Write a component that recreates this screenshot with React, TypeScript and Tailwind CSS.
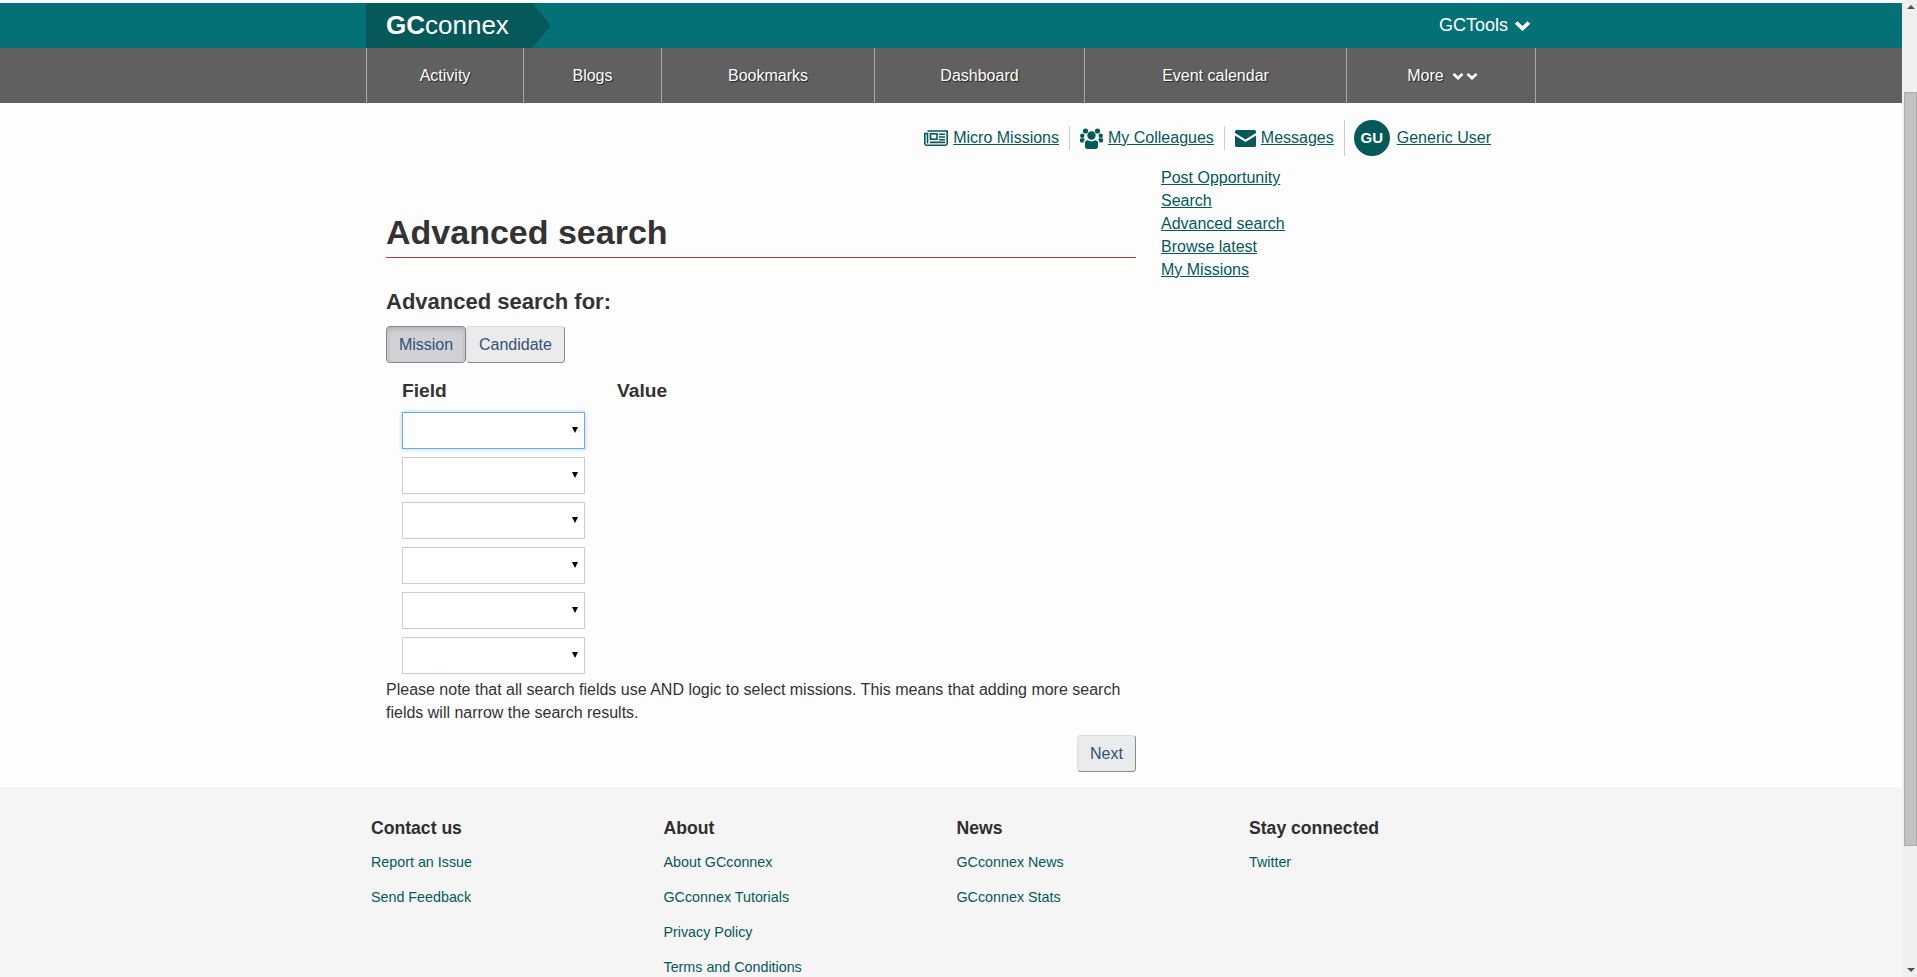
import React from "react";

const navItems: [string, string][] = [
  ["Activity", "w-[157px]"],
  ["Blogs", "w-[138px]"],
  ["Bookmarks", "w-[213px]"],
  ["Dashboard", "w-[210px]"],
  ["Event calendar", "w-[262px]"],
];

function Chevron({ className }: { className: string }) {
  return (
    <svg className={className} viewBox="0 0 16 11" preserveAspectRatio="none">
      <path d="M2 2.5L8 8.5L14 2.5" fill="none" stroke="white" strokeWidth="3.6" />
    </svg>
  );
}

function NewsIcon() {
  return (
    <svg className="h-[16px] w-[24px] text-[#055959]" viewBox="0 0 24 16" fill="none" stroke="currentColor">
      <path d="M3.5 1H23.2V13.5A2 2 0 0 1 21.2 15.2H2.5A2 2 0 0 1 0.8 13.5V3.5H3.5V13.5" strokeWidth="1.6" />
      <rect x="6.5" y="3.8" width="6.5" height="5.4" strokeWidth="1.6" />
      <path d="M15 4.2H21M15 7H21M15 9.8H21M6 12.4H21" strokeWidth="1.6" />
    </svg>
  );
}

function UsersIcon() {
  return (
    <svg className="h-[21px] w-[23px]" viewBox="0 0 23 21" fill="#055959">
      <circle cx="11.5" cy="7.5" r="4.2" />
      <circle cx="5.5" cy="3" r="2.6" />
      <circle cx="17.5" cy="3" r="2.6" />
      <circle cx="2.3" cy="7.8" r="2.2" />
      <circle cx="20.7" cy="7.8" r="2.2" />
      <path d="M0 11.5C0 10.5 1 10.3 2.3 10.3C3.6 10.3 4.6 10.8 5 11.6C4 12.4 3.6 13.4 3.6 14.5H1.2C0.5 14.5 0 14 0 13.3Z" />
      <path d="M23 11.5C23 10.5 22 10.3 20.7 10.3C19.4 10.3 18.4 10.8 18 11.6C19 12.4 19.4 13.4 19.4 14.5H21.8C22.5 14.5 23 14 23 13.3Z" />
      <path d="M5 15C5 13 6.3 12 8 12.2C9 13 10 13.3 11.5 13.3C13 13.3 14 13 15 12.2C16.7 12 18 13 18 15V18.5C18 20 17 21 15.5 21H7.5C6 21 5 20 5 18.5Z" />
    </svg>
  );
}

function MailIcon() {
  return (
    <svg className="h-[17px] w-[21px]" viewBox="0 0 21 17" fill="#055959">
      <path d="M1.5 0H19.5A1.5 1.5 0 0 1 21 1.5V3L10.5 9.5L0 3V1.5A1.5 1.5 0 0 1 1.5 0Z" />
      <path d="M0 5.5L10.5 12L21 5.5V15.5A1.5 1.5 0 0 1 19.5 17H1.5A1.5 1.5 0 0 1 0 15.5Z" />
    </svg>
  );
}

function Select({ focused }: { focused?: boolean }) {
  return (
    <div
      className={
        "relative h-[37px] w-[183px] bg-white border " +
        (focused ? "border-[#66afe9] shadow-[0_0_4px_rgba(102,175,233,0.6)]" : "border-[#cccccc]")
      }
    >
      <span className="absolute right-[6px] top-[14px] h-0 w-0 border-x-[3px] border-t-[6px] border-x-transparent border-t-black" />
    </div>
  );
}

function FooterCol({ title, links, w }: { title: string; links: string[]; w: string }) {
  return (
    <div className={w}>
      <h3 className="text-[17.6px] font-bold leading-[20px] text-[#2f2f2f]">{title}</h3>
      <ul className="mt-[15px] flex flex-col gap-[16px]">
        {links.map((l) => (
          <li key={l} className="text-[14.3px] leading-[19px] text-[#055959]">
            {l}
          </li>
        ))}
      </ul>
    </div>
  );
}

export default function App() {
  return (
    <div className="flex h-[977px] w-[1917px] overflow-hidden bg-white font-['Liberation_Sans',Arial,sans-serif] text-[16px] text-[#333333]">
      <div className="flex w-[1902px] flex-col overflow-hidden">
        <div className="h-[3px] bg-white" />
        <header className="flex h-[45px] bg-[#047177]">
          <div className="mx-auto flex w-[1170px] items-stretch justify-between">
            <div className="relative flex h-full w-[166px] items-center bg-[#055959] pl-[20px] text-[26px] text-white">
              <span className="font-bold">GC</span>
              <span>connex</span>
              <svg className="absolute left-[166px] top-0 h-[45px] w-[19px]" viewBox="0 0 19 45">
                <path d="M0 0L19 22.5L0 45Z" fill="#055959" />
              </svg>
            </div>
            <div className="flex items-center pr-[5px] text-[18px] text-white">
              <span>GCTools</span>
              <Chevron className="ml-[6px] h-[11px] w-[17px]" />
            </div>
          </div>
        </header>
        <nav className="h-[55px] bg-[#606060]">
          <div className="mx-auto flex h-full w-[1170px] border-l border-[#a8a8a8]">
            {navItems.map(([t, w]) => (
              <div
                key={t}
                className={w + " flex items-center justify-center border-r border-[#a8a8a8] text-white [text-shadow:1px_1px_1px_#222]"}
              >
                {t}
              </div>
            ))}
            <div className="flex w-[189px] items-center justify-center gap-[8px] border-r border-[#a8a8a8] pl-[3px] text-white [text-shadow:1px_1px_1px_#222]">
              <span>More</span>
              <span className="flex gap-[2px]">
                <Chevron className="h-[8px] w-[12px]" />
                <Chevron className="h-[8px] w-[12px]" />
              </span>
            </div>
          </div>
        </nav>

        <main className="h-[684px] bg-[#fdfdfd]">
          <div className="mx-auto w-[1170px] pt-[17px]">
            <div className="flex h-[36px] items-center justify-end pr-[45px] text-[#055959]">
              <NewsIcon />
              <a className="ml-[5px] underline">Micro Missions</a>
              <span className="ml-[10px] mr-[10px] h-[24px] w-px bg-[#cccccc]" />
              <UsersIcon />
              <a className="ml-[5px] underline">My Colleagues</a>
              <span className="mx-[10px] h-[24px] w-px bg-[#cccccc]" />
              <MailIcon />
              <a className="ml-[5px] underline">Messages</a>
              <span className="ml-[10px] mr-[9px] h-[36px] w-px bg-[#cccccc]" />
              <span className="flex h-[36px] w-[36px] items-center justify-center rounded-full bg-[#055959] text-[15px] font-bold text-white">
                GU
              </span>
              <a className="ml-[7px] underline">Generic User</a>
            </div>

            <div className="mt-[10px] flex">
              <div className="ml-[20px] w-[750px]">
                <h1 className="mt-[47px] h-[45px] border-b border-[#af3c43] text-[34px] font-bold leading-[38px] text-[#333333]">
                  Advanced search
                </h1>
                <h2 className="mt-[32px] text-[22px] font-bold leading-[24px] text-[#333333]">Advanced search for:</h2>
                <div className="mt-[12px] flex">
                  <button className="h-[37px] w-[80px] rounded-[4px] border border-[#8a8a8a] bg-[#cfd1d5] text-[#335075] shadow-[inset_0_3px_5px_rgba(0,0,0,0.125)]">
                    Mission
                  </button>
                  <button className="h-[37px] w-[99px] rounded-[4px] border border-[#dcdee1] border-b-[#8a8a8a] border-r-[#8a8a8a] bg-[#eaebed] text-[#335075]">
                    Candidate
                  </button>
                </div>
                <div className="ml-[16px] mt-[16px] flex text-[19.2px] font-bold leading-[24px]">
                  <span className="w-[215px]">Field</span>
                  <span>Value</span>
                </div>
                <div className="ml-[16px] mt-[9px] flex flex-col gap-[8px]">
                  <Select focused />
                  <Select />
                  <Select />
                  <Select />
                  <Select />
                  <Select />
                </div>
                <p className="mt-[4px] leading-[23px]">
                  Please note that all search fields use AND logic to select missions. This means that adding more search fields will narrow the search results.
                </p>
                <div className="mt-[11px] flex justify-end">
                  <button className="h-[37px] w-[59px] rounded-[4px] border border-[#dcdee1] border-b-[#8a8a8a] border-r-[#8a8a8a] bg-[#eaebed] text-[#335075]">
                    Next
                  </button>
                </div>
              </div>
              <div className="ml-[25px] flex flex-col leading-[23px] text-[#055959] underline">
                <a>Post Opportunity</a>
                <a>Search</a>
                <a>Advanced search</a>
                <a>Browse latest</a>
                <a>My Missions</a>
              </div>
            </div>
          </div>
        </main>

        <footer className="flex-1 bg-[#f5f5f5]">
          <div className="mx-auto flex w-[1170px] pl-[5px] pt-[31px]">
            <FooterCol w="w-[292.5px]" title="Contact us" links={["Report an Issue", "Send Feedback"]} />
            <FooterCol w="w-[293px]" title="About" links={["About GCconnex", "GCconnex Tutorials", "Privacy Policy", "Terms and Conditions"]} />
            <FooterCol w="w-[292.5px]" title="News" links={["GCconnex News", "GCconnex Stats"]} />
            <FooterCol w="w-[200px]" title="Stay connected" links={["Twitter"]} />
          </div>
        </footer>
      </div>

      <div className="flex w-[15px] flex-col items-center bg-[#f0f0f0] pl-[2px]">
        <div className="mt-[5px] h-0 w-0 border-x-[4px] border-b-[4px] border-x-transparent border-b-[#505050]" />
        <div className="mt-[83px] h-[754px] w-[13px] border border-[#acacac] bg-[#c2c2c2]" />
        <div className="mt-auto mb-[5px] h-0 w-0 border-x-[4px] border-t-[4px] border-x-transparent border-t-[#505050]" />
      </div>
    </div>
  );
}
